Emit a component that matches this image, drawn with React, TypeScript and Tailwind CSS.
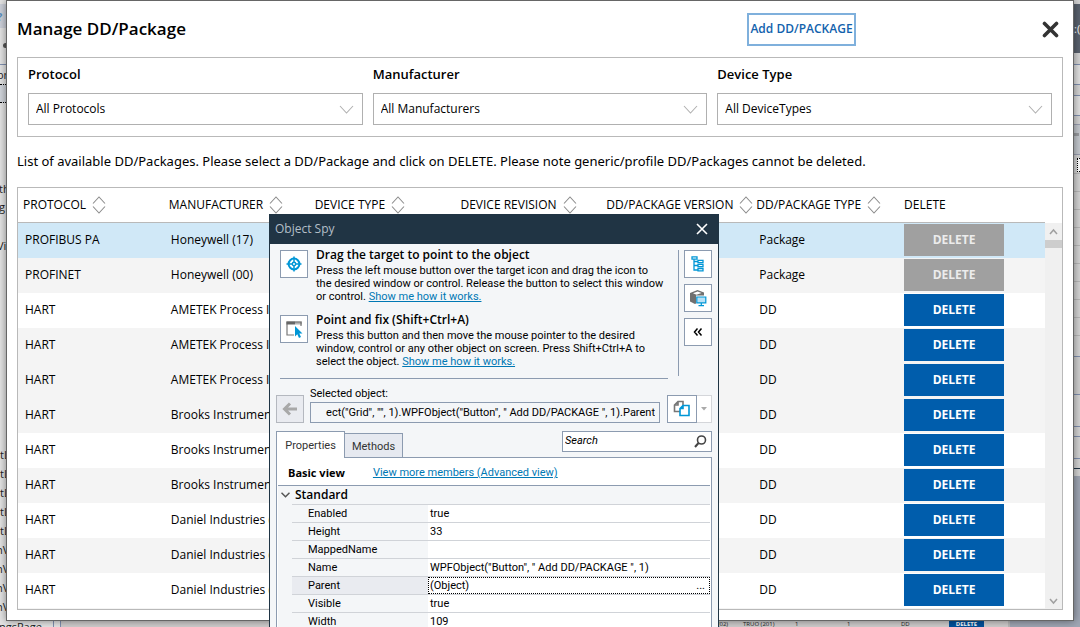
import type { ReactNode } from "react";

const rows = [
  { protocol: "PROFIBUS PA", maker: "Honeywell (17)", type: "Package", locked: true, bg: "bg-[#d0e8f7]" },
  { protocol: "PROFINET", maker: "Honeywell (00)", type: "Package", locked: true, bg: "bg-[#f4f4f4]" },
  { protocol: "HART", maker: "AMETEK Process Instruments", type: "DD", locked: false, bg: "bg-white" },
  { protocol: "HART", maker: "AMETEK Process Instruments", type: "DD", locked: false, bg: "bg-[#f4f4f4]" },
  { protocol: "HART", maker: "AMETEK Process Instruments", type: "DD", locked: false, bg: "bg-[#f4f4f4]" },
  { protocol: "HART", maker: "Brooks Instrument", type: "DD", locked: false, bg: "bg-[#f4f4f4]" },
  { protocol: "HART", maker: "Brooks Instrument", type: "DD", locked: false, bg: "bg-white" },
  { protocol: "HART", maker: "Brooks Instrument", type: "DD", locked: false, bg: "bg-[#f4f4f4]" },
  { protocol: "HART", maker: "Daniel Industries (0)", type: "DD", locked: false, bg: "bg-white" },
  { protocol: "HART", maker: "Daniel Industries (0)", type: "DD", locked: false, bg: "bg-[#f4f4f4]" },
  { protocol: "HART", maker: "Daniel Industries (0)", type: "DD", locked: false, bg: "bg-white" },
];

const columns = ["PROTOCOL", "MANUFACTURER", "DEVICE TYPE", "DEVICE REVISION", "DD/PACKAGE VERSION", "DD/PACKAGE TYPE"];

const filters = [
  { id: "protocol", label: "Protocol", value: "All Protocols" },
  { id: "manufacturer", label: "Manufacturer", value: "All Manufacturers" },
  { id: "device-type", label: "Device Type", value: "All DeviceTypes" },
];

const properties = [
  { name: "Enabled", value: "true" },
  { name: "Height", value: "33" },
  { name: "MappedName", value: "" },
  { name: "Name", value: 'WPFObject("Button", " Add DD/PACKAGE ", 1)' },
  { name: "Parent", value: "(Object)", selected: true },
  { name: "Visible", value: "true" },
  { name: "Width", value: "109" },
];

const leftLabels = [
  { text: "on", place: "top-[67px] -left-[3px]" },
  { text: "th", place: "top-[181px] -left-px" },
  { text: "g", place: "top-[199px] -left-px" },
  { text: "Vi", place: "top-[238px] -left-[3px]" },
  { text: "tL", place: "top-[447px] left-0" },
  { text: "tL", place: "top-[466px] left-0" },
  { text: "tL", place: "top-[485px] left-0" },
  { text: "tL", place: "top-[504px] left-0" },
  { text: "tL", place: "top-[523px] left-0" },
  { text: "nV", place: "top-[542px] -left-[4px]" },
  { text: "nV", place: "top-[561px] -left-[4px]" },
  { text: "nV", place: "top-[580px] -left-[4px]" },
  { text: "nV", place: "top-[599px] -left-[4px]" },
];

const gridLines = [0, 1, 2, 3, 4, 5, 6, 7, 8, 9];

function SortIcon() {
  return (
    <svg width="14" height="18" viewBox="0 0 14 18" fill="none" stroke="#8c8c8c" strokeWidth="1.1" className="shrink-0">
      <path d="M1 7.500 7 1l6 6.500M1 10.500 7 17l6-6.500" />
    </svg>
  );
}

function Backdrop() {
  return (
    <div aria-hidden="true" className="absolute inset-0 overflow-hidden bg-[#dedede] text-[11px] leading-4 text-[#222]">
      <div className="absolute top-0 left-0 h-full w-[6px] overflow-hidden bg-[#e4e4e4]">
        <div className="absolute top-[4px] h-[24px] w-full bg-[#cdd1da]" />
        <div className="absolute top-[9px] -left-[3px] font-bold text-[#5b8fc0]">?</div>
        <div className="absolute top-[43px] left-[3px] h-[5px] w-[3px] rounded-l-full bg-[#555]" />
        <div className="absolute top-[64px] h-[1px] w-full bg-[#8090b0]" />
        <div className="absolute top-[84px] h-[19px] w-full border-y border-dotted border-black bg-[#d2d6dc]" />
        {leftLabels.map((l) => (
          <div key={l.place} className={`absolute ${l.place}`}>{l.text}</div>
        ))}
      </div>
      <div className="absolute top-0 right-0 h-full w-[6px] overflow-hidden bg-[#d4d4d4] whitespace-nowrap">
        <div className="absolute top-[4px] h-[49px] w-full bg-[#5a626e] pt-[17px] text-white">:(</div>
        <div className="absolute top-[64px] h-[21px] w-full border-y border-[#7f8fae] bg-[#e0e0e0]" />
        <div className="absolute top-[95px] h-[21px] w-full border-y border-[#7f8fae] bg-[#e0e0e0]" />
        <div className="absolute top-[124px] h-[31px] w-full border-y border-[#9a9fb0] bg-[#c4c8ce]" />
        <div className="absolute top-[133px] left-0 h-[3px] w-[5px] bg-[#9a9ca0]" />
        <div className="absolute top-[158px] right-0 h-[14px] w-[3px] border border-r-0 border-dotted border-black bg-white" />
        <div className="absolute top-[173px] w-full">
          {gridLines.map((n) => (
            <div key={n} className="h-[18px] border-t border-[#b8b8b8]" />
          ))}
        </div>
        <div className="absolute top-[356px] h-[39px] w-full border-y border-[#7f8fae] bg-[#cfcfcf]" />
        <div className="absolute top-[426px] h-[11px] w-full border-y border-[#7f8fae]" />
        <div className="absolute top-[458px] h-[11px] w-full border-t border-b border-t-[#7f8fae] border-b-[#1f3444]" />
        <div className="absolute top-[476px] h-full w-full bg-[#9fa6b4]" />
      </div>
      <div className="absolute bottom-0 left-0 flex h-[6px] w-full bg-[#cfcdcd]">
        <div className="relative w-[54px] overflow-hidden border-r border-[#8090b0] bg-[#e4e4e4]">
          <span className="absolute top-0 -left-px leading-3">ngsPage</span>
        </div>
        <div className="w-[7px] border-r border-[#8090b0] bg-[#e4e4e4]" />
        <div className="flex flex-1 justify-end text-[6px] leading-[6px]">
          <span className="w-[36px]">era (02)</span>
          <span className="w-[52px]">TRUO (201)</span>
          <span className="w-[52px]">1</span>
          <span className="w-[54px]">1</span>
          <span className="w-[48px]">DD</span>
        </div>
        <div className="w-[35px] bg-[#00519b] text-center text-[6px] leading-[6px] font-bold text-white">DELETE</div>
        <div className="ml-[24px] w-[72px] border-l-2 border-[#b8b8b8] bg-[#9fa6b4]" />
      </div>
    </div>
  );
}

function PackageTable() {
  return (
    <section className="flex border border-[#b9b9b9] bg-white">
      <div className="min-w-0 flex-1 bg-[#f4f4f4] pb-px">
        <table className="w-full table-fixed border-separate border-spacing-0 text-[12px] leading-[18px] whitespace-nowrap">
          <colgroup>
            <col className="w-[14.2%]" />
            <col className="w-[14.2%]" />
            <col className="w-[14.2%]" />
            <col className="w-[14.2%]" />
            <col className="w-[14.6%]" />
            <col className="w-[14.2%]" />
            <col />
          </colgroup>
          <thead>
            <tr className="h-[35px] bg-white">
              {columns.map((c) => (
                <th key={c} scope="col" className="border-b border-[#b9b9b9] p-0 pl-[5px] text-left font-normal">
                  <button type="button" className="flex items-center gap-[6px]">
                    {c}
                    <SortIcon />
                  </button>
                </th>
              ))}
              <th scope="col" className="border-b border-[#b9b9b9] p-0 pl-[7px] text-left font-normal">DELETE</th>
            </tr>
          </thead>
          <tbody>
            {rows.map((r, i) => (
              <tr key={i} className={`h-[35px] ${r.bg}`}>
                <td className="overflow-hidden p-0 pb-[2px] pl-[7px]">{r.protocol}</td>
                <td className="overflow-hidden p-0 pb-[2px] pl-[7px]">{r.maker}</td>
                <td />
                <td />
                <td />
                <td className="p-0 pb-[2px] pl-[8px]">{r.type}</td>
                <td className="p-0 pb-px pl-[7px]">
                  <button
                    type="button"
                    disabled={r.locked}
                    className={`block h-[32px] w-[100px] font-bold ${r.locked ? "bg-[#a0a0a0] text-[#ececec]" : "bg-[#005dac] text-white"}`}
                  >
                    DELETE
                  </button>
                </td>
              </tr>
            ))}
          </tbody>
        </table>
      </div>
      <div className="flex w-[17px] flex-col bg-[#f0f0f0]">
        <div className="h-[35px] bg-white" />
        <svg width="17" height="17" viewBox="0 0 17 17" fill="none" stroke="#a0a0a0" strokeWidth="1.5">
          <path d="m5 11 3.500-4 3.500 4" />
        </svg>
        <div className="h-[8px] w-full bg-[#cdcdcd]" />
        <div className="flex-1" />
        <svg width="17" height="17" viewBox="0 0 17 17" fill="none" stroke="#a0a0a0" strokeWidth="1.5">
          <path d="m5 7 3.500 4 3.500-4" />
        </svg>
      </div>
    </section>
  );
}

function ManageDialog() {
  return (
    <main className="relative mx-[6px] flex flex-col border border-[#666] bg-white px-[10px] pb-[10px] shadow-[0_0_8px_rgba(0,0,0,0.45)]">
      <header className="flex h-[56px] items-center">
        <h1 className="text-[17px] font-semibold">Manage DD/Package</h1>
        <button type="button" className="mr-[186px] ml-auto h-[33px] w-[109px] border-2 border-[#7fb0dc] text-[12px] font-semibold whitespace-nowrap text-[#1262ad]">
          Add DD/PACKAGE
        </button>
        <button type="button" aria-label="Close" className="mr-[4px]">
          <svg width="17" height="17" viewBox="0 0 17 17" stroke="#333" strokeWidth="3.600" strokeLinecap="round">
            <path d="m2.500 2.500 12 12m0-12-12 12" />
          </svg>
        </button>
      </header>
      <section className="grid grid-cols-3 gap-[10px] border border-[#b9b9b9] px-[10px] pt-[6px] pb-[11px]">
        {filters.map((f) => (
          <div key={f.id} className="flex flex-col">
            <label htmlFor={f.id} className="h-[29px] text-[13px] leading-5 font-semibold">{f.label}</label>
            <div className="relative">
              <select id={f.id} className="block h-[32px] w-full appearance-none border border-[#b0b0b0] bg-white px-[7px] text-[12px]">
                <option>{f.value}</option>
              </select>
              <svg width="15" height="9" viewBox="0 0 15 9" fill="none" stroke="#b0b0b0" strokeWidth="1.1" className="pointer-events-none absolute top-[12px] right-[9px]">
                <path d="m1 1 6.500 7L14 1" />
              </svg>
            </div>
          </div>
        ))}
      </section>
      <p className="h-[50px] font-['Noto_Sans',sans-serif] text-[13px] leading-[48px] whitespace-nowrap">
        List of available DD/Packages. Please select a DD/Package and click on DELETE. Please note generic/profile DD/Packages cannot be deleted.
      </p>
      <PackageTable />
    </main>
  );
}

function Tip({ title, children, icon }: { title: string; children: ReactNode; icon: ReactNode }) {
  return (
    <div className="flex h-[65px] gap-[8px]">
      <button type="button" aria-label={title} className="mt-[2px] flex size-[28px] shrink-0 items-center justify-center border border-[#8c9bb0] bg-white">
        {icon}
      </button>
      <div className="whitespace-nowrap">
        <h3 className="mb-[2px] font-['Open_Sans',sans-serif] text-[12px] leading-[14px] font-semibold">{title}</h3>
        <p className="text-[11px] leading-[13px]">{children}</p>
      </div>
    </div>
  );
}

function ObjectSpy() {
  const side = "flex size-[28px] items-center justify-center border border-[#8c9bb0] bg-white";
  return (
    <section aria-label="Object Spy" className="absolute top-[214px] bottom-0 left-[269px] flex w-[450px] flex-col overflow-hidden border-x border-[#1f3444] bg-[#f4f6f8] font-[Roboto,sans-serif] text-[11px] text-black">
      <header className="flex h-[30px] shrink-0 items-center justify-between bg-[#203444] pr-[10px] pl-[5px]">
        <h2 className="font-['Open_Sans',sans-serif] text-[12px] text-[#b4bfc8]">Object Spy</h2>
        <button type="button" aria-label="Close Object Spy">
          <svg width="12" height="12" viewBox="0 0 12 12" stroke="#fff" strokeWidth="1.600">
            <path d="m1 1 10 10m0-10L1 11" />
          </svg>
        </button>
      </header>
      <div className="flex shrink-0 justify-between pt-[4px] pr-[6px] pl-[10px]">
        <div className="w-[388px] border-b border-[#8c9bb0]">
          <Tip
            title="Drag the target to point to the object"
            icon={
              <svg width="16" height="16" viewBox="0 0 16 16" fill="none" stroke="#0096d6">
                <circle cx="8" cy="8" r="5.400" strokeWidth="2" />
                <circle cx="8" cy="8" r="1.700" strokeWidth="1.400" />
                <path d="M8 .5V6M8 10v5.500M.5 8H6M10 8h5.500" strokeWidth="1.500" />
              </svg>
            }
          >
            Press the left mouse button over the target icon and drag the icon to
            <br />
            the desired window or control. Release the button to select this window
            <br />
            or control. <a href="#drag" className="text-[#0078b4] underline">Show me how it works.</a>
          </Tip>
          <Tip
            title="Point and fix (Shift+Ctrl+A)"
            icon={
              <svg width="18" height="18" viewBox="0 0 18 18" fill="none">
                <path d="M9 15H2V2h14v4" stroke="#777" strokeWidth="1.200" />
                <path d="M1.500 3h15" stroke="#666" strokeWidth="3" strokeDasharray="9 1 1 1 1 1 2" />
                <path d="M10 6v10.500l2.300-2.200 1.700 3.700 2-1-1.700-3.500H17.500Z" fill="#0096d6" />
              </svg>
            }
          >
            Press this button and then move the mouse pointer to the desired
            <br />
            window, control or any other object on screen. Press Shift+Ctrl+A to
            <br />
            select the object. <a href="#point" className="text-[#0078b4] underline">Show me how it works.</a>
          </Tip>
        </div>
        <div className="mt-[2px] mb-[3px] flex flex-col gap-[6px] border-l border-[#8c9bb0] pl-[5px]">
          <button type="button" aria-label="Show object tree" className={side}>
            <svg width="14" height="16" viewBox="0 0 14 16" fill="#fff" stroke="#0096d6" strokeWidth="1.300">
              <path d="M3 3v11h4M3 5.500h4M3 9.500h4" fill="none" />
              <path d="M1 .8h5v2.400H1ZM7 4.300h5v2.400H7ZM7 8.300h5v2.400H7ZM7 12.500h5v2.400H7Z" />
            </svg>
          </button>
          <button type="button" aria-label="Highlight object" className={side}>
            <svg width="18" height="18" viewBox="0 0 18 18" fill="none">
              <path d="M1 4 8.500 1l6.500 2.500v3H7v8l-1 .5-5-2.500Z" fill="#707070" />
              <path d="m4 4.200 4.700-1.700L12.500 4 7.500 5.800Z" fill="#fff" />
              <path d="M7.800 8h9v5.800h-9ZM12.300 14v2.500M9.500 16.700h5.500" fill="#b9e2f7" stroke="#0096d6" strokeWidth="1.200" />
            </svg>
          </button>
          <button type="button" aria-label="Collapse" className={side}>
            <svg width="10" height="10" viewBox="0 0 10 10" fill="none" stroke="#000" strokeWidth="1.500">
              <path d="M4.500 1.500 1.500 5l3 3.500M8.500 1.500 5.500 5l3 3.500" />
            </svg>
          </button>
        </div>
      </div>
      <div className="mt-[7px] flex h-[37px] shrink-0 items-end px-[6px]">
        <button type="button" aria-label="Back" className="flex size-[28px] items-center justify-center border border-[#b4b8bf] bg-[#e9ebf0]">
          <svg width="16" height="14" viewBox="0 0 16 14" fill="none" stroke="#a8a8a8" strokeWidth="3">
            <path d="M15 7H3M8 1.500 2.500 7 8 12.500" />
          </svg>
        </button>
        <div className="ml-[6px] flex w-[350px] flex-col">
          <label htmlFor="selected" className="h-[16px] text-[11px] leading-[15px]">Selected object:</label>
          <input
            id="selected"
            readOnly
            value={'ect("Grid", "", 1).WPFObject("Button", " Add DD/PACKAGE ", 1).Parent'}
            className="h-[21px] w-full border border-[#8c9bb0] bg-transparent px-[4px] text-right text-[11px]"
          />
        </div>
        <div className="ml-auto flex h-[28px] bg-white">
          <button type="button" aria-label="Copy" className="flex w-[30px] items-center justify-center border border-[#8c9bb0]">
            <svg width="18" height="18" viewBox="0 0 18 18" fill="#fff" strokeWidth="1.600">
              <path d="M5 1.500h5v10H1.500V5ZM5 1.500V5H1.500" stroke="#777" />
              <path d="M10 5.500h6v10H7V8.500ZM10 5.500v3H7" stroke="#0096d6" />
            </svg>
          </button>
          <button type="button" aria-label="Copy options" className="flex w-[15px] items-center justify-center border border-l-0 border-[#d4d6da]">
            <svg width="6" height="4" viewBox="0 0 6 4" fill="#aaa">
              <path d="M0 0h6L3 3.500Z" />
            </svg>
          </button>
        </div>
      </div>
      <div className="mt-[8px] flex h-[26px] shrink-0 items-end px-[6px]">
        <button type="button" className="relative -mb-px h-[27px] w-[69px] border border-b-0 border-[#8c9bb0] bg-white pt-[3px] text-[#333]">Properties</button>
        <button type="button" className="h-[24px] w-[58px] border border-b-0 border-l-0 border-[#8c9bb0] bg-[#e6e9f0] pt-[4px] text-[#333]">Methods</button>
        <div className="mb-auto ml-auto flex h-[21px] w-[150px] items-center border border-[#8c9bb0] bg-white pr-[4px]">
          <input aria-label="Search" placeholder="Search" className="min-w-0 flex-1 px-[2px] text-[11px] italic placeholder:text-black" />
          <svg width="13" height="13" viewBox="0 0 13 13" fill="none" stroke="#444" strokeWidth="1.600">
            <circle cx="7.500" cy="5" r="4" />
            <path d="M4.500 8 1 12" strokeWidth="2" />
          </svg>
        </div>
      </div>
      <div className="mx-[6px] flex-1 overflow-hidden border border-b-0 border-[#8c9bb0] bg-white px-px">
        <div className="flex h-[28px] items-center gap-[28px] border-b border-[#8c9bb0] pt-[4px] pl-[10px]">
          <strong className="font-['Open_Sans',sans-serif]">Basic view</strong>
          <a href="#advanced" className="text-[#0078b4] underline">View more members (Advanced view)</a>
        </div>
        <div className="flex h-[18px] items-center bg-[#f4f6f8] pl-[3px]">
          <svg width="9" height="6" viewBox="0 0 9 6" fill="none" stroke="#555" strokeWidth="1.500">
            <path d="m.5.7 4 4 4-4" />
          </svg>
          <strong className="ml-[5px] font-['Open_Sans',sans-serif] text-[12px] font-semibold">Standard</strong>
        </div>
        <div className="bg-[#f4f6f8] pl-[14px]">
          <table className="w-full table-fixed border-collapse">
            <colgroup>
              <col className="w-[136px]" />
              <col />
            </colgroup>
            <tbody>
              {properties.map((p) => (
                <tr key={p.name} className="h-[18px] border-t border-[#d0d3d8]">
                  <th scope="row" className={`p-0 pl-[16px] text-left leading-[15px] font-normal ${p.selected ? "bg-[#e9ebf0]" : "bg-[#f4f6f8]"}`}>{p.name}</th>
                  <td className="bg-white p-0">
                    <div className={`flex h-[17px] items-center justify-between leading-[15px] ${p.selected ? "border border-dotted border-black px-px pr-[4px]" : "px-[2px]"}`}>
                      <span>{p.value}</span>
                      {p.selected && <span>...</span>}
                    </div>
                  </td>
                </tr>
              ))}
            </tbody>
          </table>
        </div>
      </div>
    </section>
  );
}

export default function App() {
  return (
    <div className="relative h-screen overflow-hidden font-['Open_Sans','Noto_Sans',sans-serif] text-black">
      <Backdrop />
      <ManageDialog />
      <ObjectSpy />
    </div>
  );
}
